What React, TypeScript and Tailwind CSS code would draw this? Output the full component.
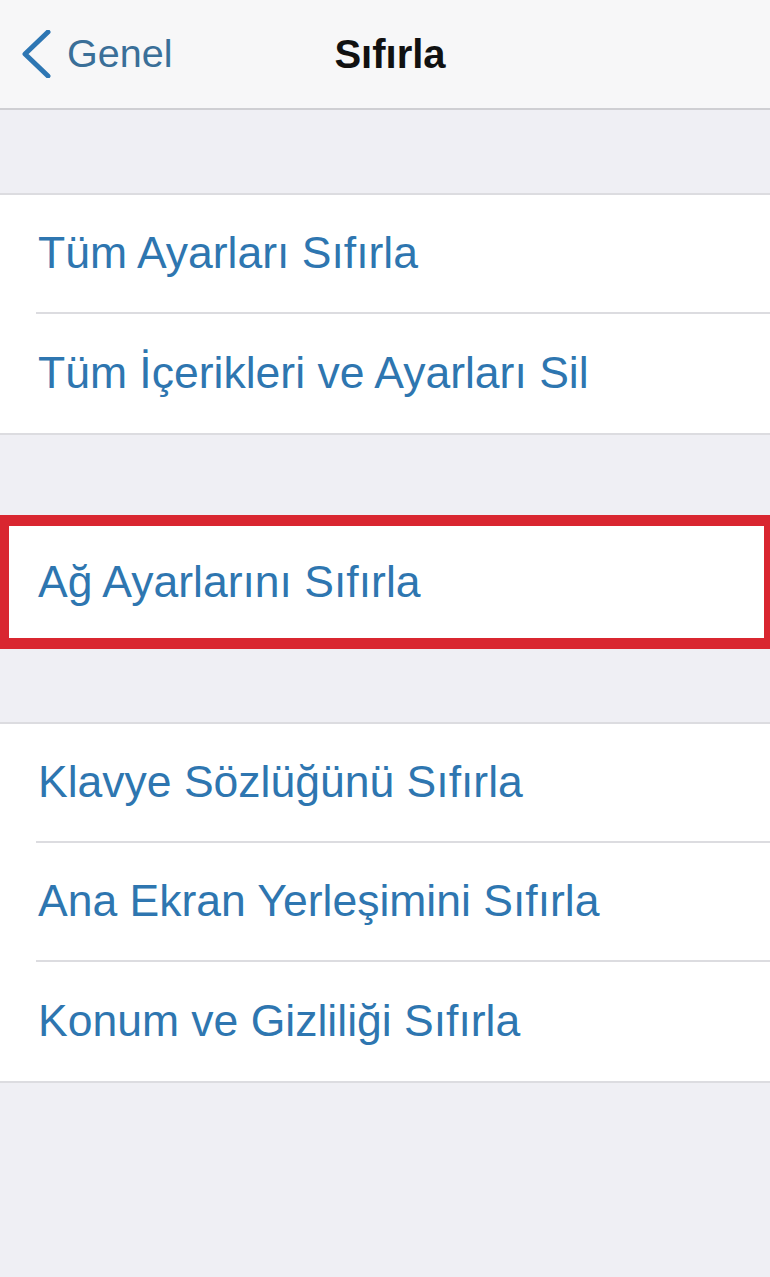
const groups: string[][] = [
  ['Tüm Ayarları Sıfırla', 'Tüm İçerikleri ve Ayarları Sil'],
  ['Ağ Ayarlarını Sıfırla'],
  ['Klavye Sözlüğünü Sıfırla', 'Ana Ekran Yerleşimini Sıfırla', 'Konum ve Gizliliği Sıfırla'],
];

function Row({ label, last }: { label: string; last: boolean }) {
  return (
    <div className="pl-[36px]">
      <div
        className={`h-[119px] flex items-center pl-[2px] ${last ? '' : 'border-b-2 border-[#dcdce0]'}`}
      >
        <span className="text-[44.5px] text-[#2e76b0]">{label}</span>
      </div>
    </div>
  );
}

export default function App() {
  return (
    <div
      className="w-[770px] h-[1277px] bg-[#efeff4] overflow-hidden"
      style={{ fontFamily: '"Liberation Sans", Arial, sans-serif' }}
    >
      {/* Nav bar */}
      <div className="relative h-[110px] bg-[#f7f7f8] border-b-2 border-[#cfcfd3] flex items-center">
        <div className="flex items-center pl-[20px] gap-[15px]">
          <svg width="32" height="48" viewBox="0 0 32 48" fill="none">
            <path d="M28 2 L5 24 L28 46" stroke="#2d76b3" strokeWidth="5" strokeLinecap="round" strokeLinejoin="round" />
          </svg>
          <span className="text-[39.5px] text-[#3a6f98]">Genel</span>
        </div>
        <div className="absolute left-0 right-0 text-center pointer-events-none">
          <span className="text-[40px] font-bold text-[#111] pl-[10px]">Sıfırla</span>
        </div>
      </div>

      <div className="h-[83px]" />

      {/* Group 1 */}
      <div className="bg-white border-y-2 border-[#dcdce0]">
        {groups[0].map((l, i) => (
          <Row key={l} label={l} last={i === groups[0].length - 1} />
        ))}
      </div>

      <div className="h-[80px]" />

      {/* Highlighted group */}
      <div className="bg-white border-[11px] border-[#d92630] border-l-[9px] border-r-[6px]">
        <div className="h-[112px] flex items-center pl-[29px]">
          <span className="text-[44.5px] text-[#2e76b0]">{groups[1][0]}</span>
        </div>
      </div>

      <div className="h-[73px]" />

      {/* Group 3 */}
      <div className="bg-white border-y-2 border-[#dcdce0]">
        {groups[2].map((l, i) => (
          <Row key={l} label={l} last={i === groups[2].length - 1} />
        ))}
      </div>
    </div>
  );
}
